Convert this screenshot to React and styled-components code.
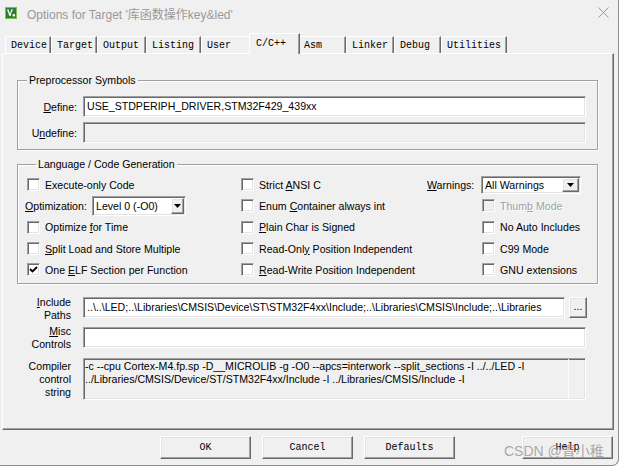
import React from "react"
import styled, { createGlobalStyle } from "styled-components"

const GlobalStyle = createGlobalStyle`
  html, body {
    margin: 0;
    padding: 0;
    background: #ffffff;
  }
  body {
    font-family: "Liberation Sans", Arial, sans-serif;
    font-size: 10.6px;
    color: #000;
  }
  * {
    box-sizing: border-box;
  }
`

const sunken = `
  border: 1px solid;
  border-color: #a0a0a0 #ffffff #ffffff #a0a0a0;
  box-shadow: inset 1px 1px 0 #696969, inset -1px -1px 0 #e3e3e3;
`

const raised = `
  border: 1px solid;
  border-color: #ffffff #696969 #696969 #ffffff;
  box-shadow: inset -1px -1px 0 #a0a0a0, inset 1px 1px 0 #e3e3e3;
`

const mono = `"Liberation Mono", "DejaVu Sans Mono", monospace`

const Window = styled.div`
  position: relative;
  width: 619px;
  height: 466px;
  background: #f0f0f0;
  border-right: 1px solid #8c8c8c;
  border-bottom: 1px solid #8c8c8c;
  border-bottom-right-radius: 7px;
  overflow: hidden;
`

const TitleBar = styled.div`
  display: flex;
  align-items: center;
  height: 26px;
  padding-left: 5px;

  .title {
    margin-left: 10px;
    font-family: "Liberation Sans", "Noto Sans CJK SC", sans-serif;
    font-size: 12px;
    color: #999;
    white-space: nowrap;
  }

  .close {
    margin-left: auto;
    margin-right: 9px;
  }
`

const TabStrip = styled.div`
  display: flex;
  align-items: flex-end;
  height: 27px;
  padding-left: 5px;
  position: relative;
  z-index: 1;
`

const Tab = styled.div`
  display: flex;
  align-items: center;
  width: ${({ $w }) => $w}px;
  height: 17px;
  padding-left: 5px;
  background: #f0f0f0;
  border-top: 1px solid #ffffff;
  border-left: 1px solid #ffffff;
  border-right: 1px solid #696969;
  box-shadow: inset -1px 0 0 #a0a0a0;
  font-family: ${mono};
  font-size: 10px;
  white-space: nowrap;

  &.active {
    position: relative;
    z-index: 2;
    height: 21px;
    margin: 0 -2px -1px;
    padding-left: 6px;
    padding-bottom: 1px;
  }
`

const Panel = styled.div`
  margin: 0 4px 0 2px;
  height: 377px;
  padding: 19px 0 0;
  border: 1px solid;
  border-color: #ffffff #696969 #696969 #ffffff;
  box-shadow: inset -1px -1px 0 #a0a0a0;
`

const Group = styled.fieldset`
  margin: ${({ $top }) => $top}px 15px 0 14px;
  padding: ${({ $pad }) => $pad};
  min-width: 0;
  border: 1px solid #a0a0a0;
  box-shadow: inset 1px 1px 0 #ffffff, 1px 1px 0 #ffffff;

  legend {
    margin-left: 9px;
    padding: 0 2px;
    line-height: 14px;
    background: #f0f0f0;
  }
`

const SymbolGrid = styled.div`
  display: grid;
  grid-template-columns: 59px minmax(0, 1fr);
  column-gap: 6px;
  row-gap: 5px;
  align-items: center;
`

const FieldLabel = styled.div`
  text-align: right;
  white-space: nowrap;
`

const TextField = styled.div`
  ${sunken};
  height: ${({ $h }) => $h || 21}px;
  padding: 0 3px;
  line-height: 19px;
  background: ${({ $disabled }) => ($disabled ? "#f0f0f0" : "#ffffff")};
  white-space: nowrap;
  overflow: hidden;
  flex: 1;
  min-width: 0;
`

const LangGrid = styled.div`
  display: grid;
  grid-template-columns: 214px 186px 1fr;
`

const Column = styled.div`
  display: flex;
  flex-direction: column;
`

const Row = styled.div`
  display: flex;
  align-items: center;
  height: 21.3px;
  padding-left: ${({ $indent }) => $indent || 0}px;
  white-space: nowrap;
  color: ${({ $disabled }) => ($disabled ? "#a0a0a0" : "#000")};
  text-shadow: ${({ $disabled }) => ($disabled ? "1px 1px 0 #ffffff" : "none")};
`

const Box = styled.span`
  ${sunken};
  display: inline-flex;
  align-items: center;
  justify-content: center;
  width: 13px;
  height: 13px;
  margin-right: 5px;
  background: ${({ $disabled }) => ($disabled ? "#f0f0f0" : "#ffffff")};
  flex: none;
`

const InlineLabel = styled.span`
  display: inline-block;
  width: ${({ $w }) => $w}px;
  margin-left: ${({ $ml }) => $ml || 0}px;
`

const SelectBox = styled.div`
  ${sunken};
  display: flex;
  align-items: stretch;
  width: ${({ $w }) => $w}px;
  height: ${({ $h }) => $h}px;
  padding: 1px;
  background: #ffffff;

  .value {
    flex: 1;
    display: flex;
    align-items: center;
    padding-left: 2px;
  }

  .drop {
    ${raised};
    display: flex;
    align-items: center;
    justify-content: center;
    width: ${({ $bw }) => $bw}px;
    background: #f0f0f0;
  }
`

const LowerForm = styled.div`
  display: grid;
  grid-template-columns: 68px minmax(0, 1fr);
  column-gap: 12px;
  margin-top: 13px;
  padding-right: 27px;
`

const StackLabel = styled.div`
  text-align: right;
  line-height: 13px;
  margin-top: ${({ $mt }) => $mt}px;
`

const FieldRow = styled.div`
  display: flex;
  gap: 4px;
  min-width: 0;
  margin-bottom: ${({ $mb }) => $mb || 0}px;
`

const BrowseButton = styled.div`
  ${raised};
  width: 18px;
  height: 21px;
  margin-right: -1px;
  background: #f0f0f0;
  text-align: center;
  line-height: 17px;
  flex: none;
`

const ControlString = styled.div`
  ${sunken};
  display: flex;
  height: 42px;
  min-width: 0;
  background: #f0f0f0;

  .text {
    flex: 1;
    min-width: 0;
    padding: 1px 1px;
    line-height: 13px;
    white-space: nowrap;
    overflow: hidden;
  }

  .gutter {
    width: 17px;
    border-left: 1px solid #fafafa;
  }
`

const ButtonBar = styled.div`
  display: flex;
  justify-content: flex-end;
  gap: 11px;
  margin-top: 6px;
  padding-right: 5px;
`

const DialogButton = styled.div`
  ${raised};
  width: 91px;
  height: 23px;
  margin-left: ${({ $ml }) => $ml || 0}px;
  background: #f0f0f0;
  font-family: ${mono};
  font-size: 10px;
  line-height: 21px;
  text-align: center;
`

const Watermark = styled.div`
  position: absolute;
  left: 504px;
  top: 442px;
  font-family: "Liberation Sans", "Noto Sans CJK SC", sans-serif;
  font-size: 14px;
  line-height: 18px;
  color: rgba(150, 150, 150, 0.8);
  white-space: nowrap;
  pointer-events: none;
`

function KeilIcon() {
  return (
    <svg width="12" height="12" viewBox="0 0 12 12">
      <rect x="0.5" y="0.5" width="11" height="11" fill="#2e7d32" stroke="#7cc04a" />
      <path d="M2 2.5 L3.6 2.5 L5 7 L6.2 2.5 L7.2 2.5 L5.6 9 L4.4 9 Z" fill="#fff" />
      <path d="M6.6 2.5 L7.8 2.5 L6.8 6 Z" fill="#fff" />
      <rect x="7.6" y="7.2" width="2.4" height="2.2" fill="#fff" />
    </svg>
  )
}

function CloseIcon() {
  return (
    <svg width="11" height="11" viewBox="0 0 11 11">
      <path d="M0.5 0.5 L10.5 10.5 M10.5 0.5 L0.5 10.5" stroke="#9a9a9a" strokeWidth="1" />
    </svg>
  )
}

function Arrow() {
  return (
    <svg width="7" height="4" viewBox="0 0 7 4">
      <path d="M0 0 H7 L3.5 4 Z" fill="#000" />
    </svg>
  )
}

function Check({ label, checked, disabled }) {
  return (
    <>
      <Box $disabled={disabled}>
        {checked && (
          <svg width="9" height="9" viewBox="0 0 9 9">
            <path d="M1 4 L3.5 6.5 L8 2" fill="none" stroke="#000" strokeWidth="1.8" />
          </svg>
        )}
      </Box>
      <span>{label}</span>
    </>
  )
}

const tabs = [
  { name: "Device", w: 46 },
  { name: "Target", w: 46 },
  { name: "Output", w: 49 },
  { name: "Listing", w: 55 },
  { name: "User", w: 50 },
  { name: "C/C++", w: 51, active: true },
  { name: "Asm", w: 48 },
  { name: "Linker", w: 48 },
  { name: "Debug", w: 47 },
  { name: "Utilities", w: 66 },
]

export default function App() {
  return (
    <Window>
      <GlobalStyle />
      <TitleBar>
        <KeilIcon />
        <span className="title">Options for Target '库函数操作key&amp;led'</span>
        <span className="close"><CloseIcon /></span>
      </TitleBar>

      <TabStrip>
        {tabs.map((t) => (
          <Tab key={t.name} $w={t.w} className={t.active ? "active" : ""}>{t.name}</Tab>
        ))}
      </TabStrip>

      <Panel>
        <Group $top={0} $pad="9px 11px 6px 0">
          <legend>Preprocessor Symbols</legend>
          <SymbolGrid>
            <FieldLabel><u>D</u>efine:</FieldLabel>
            <TextField>USE_STDPERIPH_DRIVER,STM32F429_439xx</TextField>
            <FieldLabel>U<u>n</u>define:</FieldLabel>
            <TextField $disabled />
          </SymbolGrid>
        </Group>

        <Group $top={7} $pad="3px 0 3px 9px">
          <legend>Language / Code Generation</legend>
          <LangGrid>
            <Column>
              <Row><Check label="Execute-only Code" /></Row>
              <Row>
                <InlineLabel $w={67} $ml={-2}><u>O</u>ptimization:</InlineLabel>
                <SelectBox $w={94} $h={20} $bw={13}>
                  <span className="value">Level 0 (-O0)</span>
                  <span className="drop"><Arrow /></span>
                </SelectBox>
              </Row>
              <Row><Check label={<>Optimize <u>f</u>or Time</>} /></Row>
              <Row><Check label={<><u>S</u>plit Load and Store Multiple</>} /></Row>
              <Row><Check checked label={<>One <u>E</u>LF Section per Function</>} /></Row>
            </Column>
            <Column>
              <Row><Check label={<>Strict <u>A</u>NSI C</>} /></Row>
              <Row><Check label={<>Enum <u>C</u>ontainer always int</>} /></Row>
              <Row><Check label={<><u>P</u>lain Char is Signed</>} /></Row>
              <Row><Check label={<>Read-Onl<u>y</u> Position Independent</>} /></Row>
              <Row><Check label={<><u>R</u>ead-Write Position Independent</>} /></Row>
            </Column>
            <Column>
              <Row>
                <InlineLabel $w={54}><u>W</u>arnings:</InlineLabel>
                <SelectBox $w={100} $h={18} $bw={17}>
                  <span className="value">All Warnings</span>
                  <span className="drop"><Arrow /></span>
                </SelectBox>
              </Row>
              <Row $indent={55} $disabled><Check disabled label={<>Thum<u>b</u> Mode</>} /></Row>
              <Row $indent={55}><Check label="No Auto Includes" /></Row>
              <Row $indent={55}><Check label="C99 Mode" /></Row>
              <Row $indent={55}><Check label="GNU extensions" /></Row>
            </Column>
          </LangGrid>
        </Group>

        <LowerForm>
          <StackLabel $mt={-1}><u>I</u>nclude<br />Paths</StackLabel>
          <FieldRow $mb={9}>
            <TextField>..\..\LED;..\Libraries\CMSIS\Device\ST\STM32F4xx\Include;..\Libraries\CMSIS\Include;..\Libraries</TextField>
            <BrowseButton>...</BrowseButton>
          </FieldRow>

          <StackLabel $mt={-2}><u>M</u>isc<br />Controls</StackLabel>
          <FieldRow $mb={10}>
            <TextField />
          </FieldRow>

          <StackLabel $mt={2}>Compiler<br />control<br />string</StackLabel>
          <ControlString>
            <div className="text">
              -c --cpu Cortex-M4.fp.sp -D__MICROLIB -g -O0 --apcs=interwork --split_sections -I ../../LED -I
              <br />
              ../Libraries/CMSIS/Device/ST/STM32F4xx/Include -I ../Libraries/CMSIS/Include -I
            </div>
            <div className="gutter" />
          </ControlString>
        </LowerForm>
      </Panel>

      <ButtonBar>
        <DialogButton>OK</DialogButton>
        <DialogButton>Cancel</DialogButton>
        <DialogButton>Defaults</DialogButton>
        <DialogButton $ml={56}>Help</DialogButton>
      </ButtonBar>

      <Watermark>CSDN @青小稚</Watermark>
    </Window>
  )
}
